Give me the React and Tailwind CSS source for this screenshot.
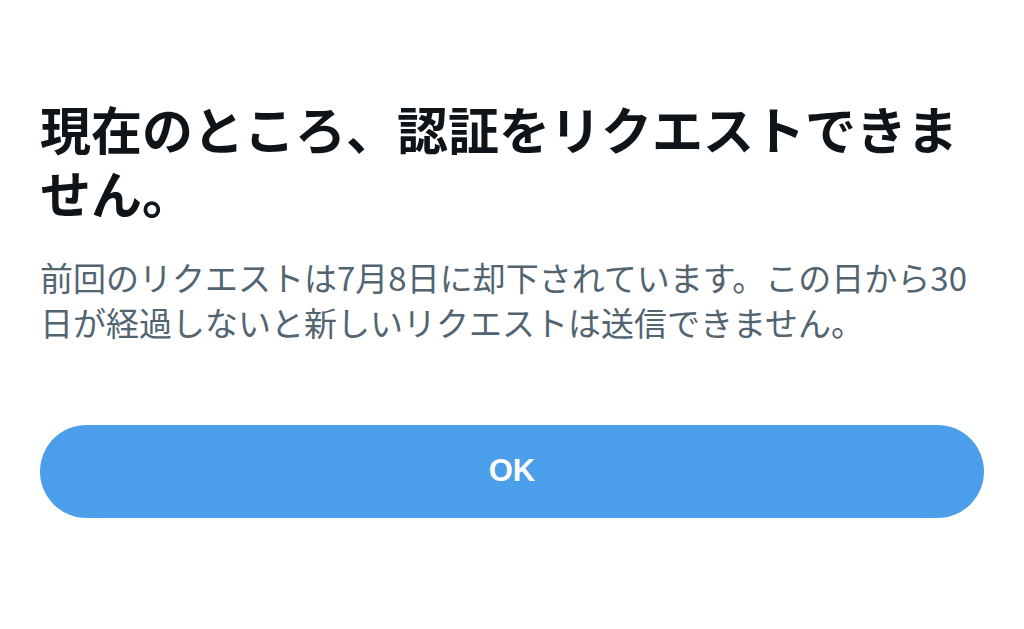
export default function App() {
  return (
    <div className="min-h-screen bg-white px-10 pt-[96px] font-['Noto_Sans_CJK_JP',sans-serif]">
      <h1 className="text-[51px] font-bold leading-[64px] text-[#0f1419]">
        現在のところ、認証をリクエストできません。
      </h1>
      <p className="mt-[31px] text-[33px] leading-[45px] text-[#536471]">
        前回のリクエストは7月8日に却下されています。この日から30日が経過しないと新しいリクエストは送信できません。
      </p>
      <button className="mt-[80px] flex h-[93px] w-full items-center justify-center rounded-full bg-[#4b9ee9] font-['Liberation_Sans',sans-serif] text-[31px] font-bold text-white">
        OK
      </button>
    </div>
  );
}
